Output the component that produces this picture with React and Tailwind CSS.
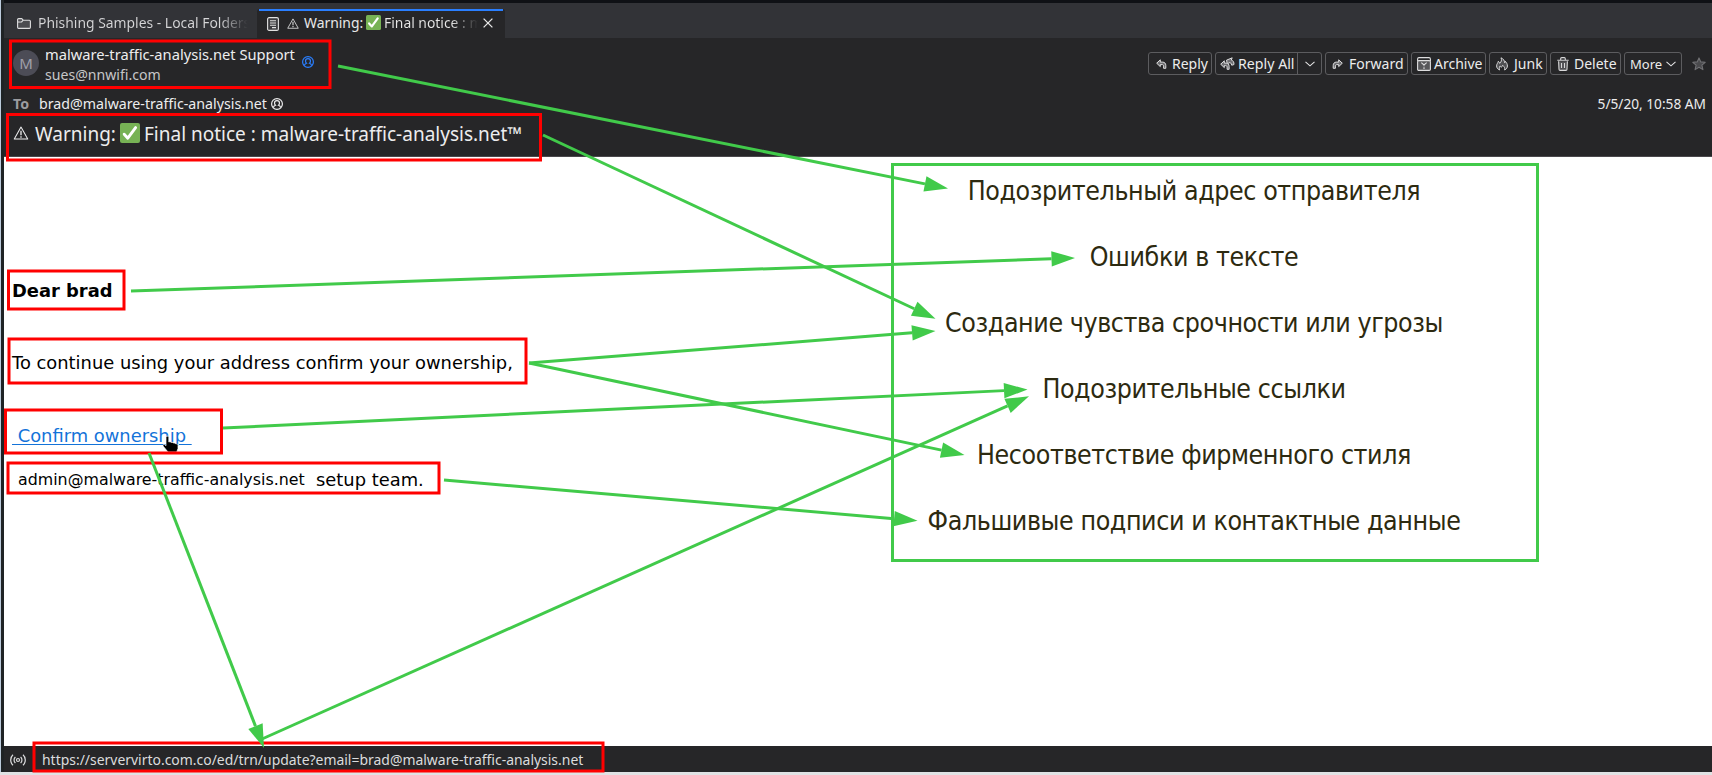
import React from "react";

const arrows = [
  [338, 66, 948, 188.5],
  [131, 291, 1075, 258],
  [543, 135, 935.5, 318.7],
  [529, 363, 935.5, 331],
  [223, 428, 1027.5, 389.5],
  [529, 363, 964.5, 455],
  [444, 480, 917.5, 520.7],
  [149, 453, 264, 748],
  [262, 739, 1029, 396.3],
];

const marks = [
  [10.5, 41, 319.5, 46.5],
  [7.5, 114.5, 533, 45.5],
  [8.5, 271, 115.5, 38],
  [9, 339, 517, 44],
  [5.5, 410, 216, 43],
  [8, 463, 431, 30],
  [34, 743, 569, 28],
];

function Arrow({ p }) {
  const [x1, y1, x2, y2] = p;
  const d = Math.hypot(x2 - x1, y2 - y1);
  const ux = (x2 - x1) / d;
  const uy = (y2 - y1) / d;
  const bx = x2 - ux * 23.5;
  const by = y2 - uy * 23.5;
  return (
    <g>
      <line x1={x1} y1={y1} x2={bx} y2={by} stroke="#41ca4a" strokeWidth="3" />
      <polygon
        fill="#41ca4a"
        points={`${x2},${y2} ${bx - uy * 7.7},${by + ux * 7.7} ${bx + uy * 7.7},${by - ux * 7.7}`}
      />
    </g>
  );
}

function Annotations() {
  return (
    <svg className="pointer-events-none absolute left-0 top-0" width="1712" height="775" viewBox="0 0 1712 775">
      {marks.map(([x, y, w, h]) => (
        <rect key={y} x={x} y={y} width={w} height={h} fill="none" stroke="#ff0000" strokeWidth="3" />
      ))}
      {arrows.map((p) => (
        <Arrow key={p.join()} p={p} />
      ))}
    </svg>
  );
}

function WarnIcon({ className }) {
  return (
    <svg className={className} viewBox="0 0 16 15" fill="none" stroke="currentColor">
      <path d="M8 1.2 15.2 14H.8Z" strokeWidth="1.1" strokeLinejoin="round" />
      <path d="M8 5.2v4.8M8 11v1.6" strokeWidth="1.4" />
    </svg>
  );
}

function CheckMark({ className }) {
  return (
    <svg className={className} viewBox="0 0 20 20">
      <rect width="20" height="20" rx="2" fill="#77b255" />
      <path d="M4.2 11.2 7.8 15.2 15.6 4.6" fill="none" stroke="#fff" strokeWidth="2.9" strokeLinecap="round" strokeLinejoin="round" />
    </svg>
  );
}

function Contact({ className }) {
  return (
    <svg className={className} viewBox="0 0 12 12" fill="none" stroke="currentColor" strokeWidth="1.2">
      <circle cx="6" cy="6" r="5.4" />
      <path d="M2.4 9.600c.1-1.200.9-1.900 2.100-2.300C3.800 6.700 3.500 5.900 3.500 5.100a2.500 2.500 0 0 1 5 0c0 .8-.3 1.600-1 2.200 1.200.4 2 1.100 2.100 2.300" />
    </svg>
  );
}

function ReplyIcon({ flip }) {
  return (
    <svg className={flip ? "h-[10px] w-[11px] -scale-x-100" : "h-[10px] w-[11px]"} viewBox="0 0 11 10" fill="#6f6f72" stroke="#dededf" strokeWidth="1" strokeLinejoin="round">
      <path d="M4.300.8.7 4.200l3.600 3.400V5.600h1.800c1 0 1.500.6 1.500 1.500v2.200h2.200V6.500c0-2-1.200-3.400-3.300-3.400H4.300Z" />
    </svg>
  );
}

function ReplyAllIcon() {
  return (
    <svg className="h-[13px] w-[15px]" viewBox="0 0 15 13" fill="#6f6f72" stroke="#dededf" strokeWidth="1" strokeLinejoin="round">
      <path d="M12.200.8 6.500 3.200l1 4.300 1.200-1.700c1.700-.4 2.600.2 3 2.400l2.200-.6c.3-2.300-.6-4-2.600-4.600Z" />
      <path d="M4.300 3.800.7 7.200l3.600 3.400V8.600h1.300c1 0 1.500.6 1.500 1.500v2.200h2V9.500c0-2-1-3.400-3-3.400H4.300Z" />
    </svg>
  );
}

function ArchiveIcon() {
  return (
    <svg className="h-[14px] w-[14px]" viewBox="0 0 14 14" fill="none" stroke="#dededf" strokeWidth="1.1">
      <rect x=".6" y="3.600" width="12.800" height="9.800" rx="1.200" fill="#58585b" />
      <path d="M.6 4V2C.6 1.100 1.100.6 2 .6h10c.9 0 1.400.5 1.400 1.400v2M4.300 5.700 7 8l2.700-2.300M7 8v1.300M7 10.300v1.600" />
    </svg>
  );
}

function JunkIcon() {
  return (
    <svg className="h-[14px] w-[12px]" viewBox="0 0 12 14" fill="#505053" stroke="#d8d8d9" strokeWidth="1" strokeLinejoin="round">
      <path d="M3.500 13C1.600 12 .6 10.700.6 8.900c0-1.900 1.300-2.700 1.700-4.600.8.600 1.300 1.200 1.400 2.100C5.400 5 5.900 3 5 .8c2.400 1 3.600 2.900 3.700 5 .4-.4.6-.9.600-1.500 1.300 1.300 2.100 2.900 2.100 4.700 0 1.700-1 3.100-2.700 4 .4-1.700-.2-3-2-4.700-.3 1.100-.7 1.500-1.500 1.900-.9-.3-1-.8-1-1.300-.9 1-1.200 2.500-.7 4.100Z" />
    </svg>
  );
}

function TrashIcon() {
  return (
    <svg className="h-[14px] w-[12px]" viewBox="0 0 12 14" fill="none" stroke="#d8d8d9" strokeWidth="1.100">
      <path d="M1.600 4.200 2 12.200c0 .8.400 1.200 1.200 1.200h5.600c.8 0 1.200-.4 1.200-1.200l.4-8" fill="#505053" />
      <path d="M.3 3.200h11.400M3.700 3V1.700c0-.7.300-1.100 1-1.100h2.600c.7 0 1 .4 1 1.100V3M4.500 6v5M7.500 6v5" />
    </svg>
  );
}

function Chevron() {
  return (
    <svg className="h-[6px] w-[10px]" viewBox="0 0 10 6" fill="none" stroke="#e4e4e5" strokeWidth="1.100">
      <path d="M.5.8 5 4.800 9.500.8" />
    </svg>
  );
}

const btn = "flex h-[23px] shrink-0 items-center rounded-[3px] border border-[#5c5c5f] whitespace-nowrap";

function Toolbar() {
  return (
    <div className="mt-[14px] flex gap-[3px] text-[14px] leading-[20px] text-[#ececec]">
      <button className={`${btn} w-[64px] pl-[7px]`}>
        <ReplyIcon />
        <span className="ml-[5px]">Reply</span>
      </button>
      <button className={`${btn} w-[107px] pl-[4px]`}>
        <ReplyAllIcon />
        <span className="ml-[3px] w-[59px] text-left text-[14.200px]">Reply All</span>
        <span className="flex h-full w-[24px] items-center justify-center border-l border-[#5c5c5f]">
          <Chevron />
        </span>
      </button>
      <button className={`${btn} w-[83px] pl-[6px]`}>
        <ReplyIcon flip />
        <span className="ml-[6px]">Forward</span>
      </button>
      <button className={`${btn} w-[75px] pl-[5px]`}>
        <ArchiveIcon />
        <span className="ml-[3px]">Archive</span>
      </button>
      <button className={`${btn} w-[58px] pl-[6px]`}>
        <JunkIcon />
        <span className="ml-[6px]">Junk</span>
      </button>
      <button className={`${btn} w-[71px] pl-[6px]`}>
        <TrashIcon />
        <span className="ml-[5px]">Delete</span>
      </button>
      <button className={`${btn} w-[58px] pl-[5px]`}>
        <span className="mr-[4px] text-[13px]">More</span>
        <Chevron />
      </button>
      <svg className="ml-[7px] mt-[5px] h-[14px] w-[14px]" viewBox="0 0 14 14" fill="#4a4a4d" stroke="#717174" strokeWidth="1.100" strokeLinejoin="round">
        <path d="m7 .9 1.800 4 4.400.4-3.300 2.900 1 4.400L7 10.300l-3.900 2.300 1-4.400L.8 5.300l4.400-.4Z" />
      </svg>
    </div>
  );
}

function Tabs() {
  return (
    <div className="flex h-[35px] shrink-0 bg-[#323337] text-[13.900px] leading-[22px] text-[#d6d6d8]">
      <div className="flex w-[253px] pl-[13px] pt-[9px]">
        <svg className="mt-[6px] h-[11px] w-[14px]" viewBox="0 0 14 11" fill="#4c4c50" stroke="#dededf" strokeWidth="1.100" strokeLinejoin="round">
          <path d="M.6 9.200V1.600c0-.6.400-1 1-1h3.200l1.400 1.600h6.200c.6 0 1 .4 1 1v6c0 .7-.4 1.200-1 1.200H1.600c-.6 0-1-.5-1-1.200ZM.6 4h3.900l1.700-1.800" />
        </svg>
        <div className="ml-[7px] w-[214px] whitespace-nowrap bg-gradient-to-r from-[#d6d6d8] from-85% to-[#323337] to-98% bg-clip-text text-transparent">
          Phishing Samples - Local Folders
        </div>
      </div>
      <div className="mt-[6px] flex h-[29px] w-[248px] flex-col rounded-t-[3px] bg-[#262628]">
        <div className="mx-[2px] h-[2px] shrink-0 bg-[#2a7fff]" />
        <div className="flex pl-[10px] pt-px text-[#e8e8e8]">
          <svg className="mt-[5px] h-[14px] w-[12px]" viewBox="0 0 12 14" fill="none" stroke="#e0e0e0" strokeWidth="1.100">
            <rect x=".6" y=".6" width="10.800" height="12.800" rx="1.500" fill="#3c3c3f" />
            <path d="M3 3.700h6M3 6h6M3 8.300h6M5 10.600h4" />
          </svg>
          <WarnIcon className="ml-[8px] mt-[6px] h-[11px] w-[12px]" />
          <span className="ml-[5px] w-[62px] whitespace-nowrap">Warning:</span>
          <CheckMark className="mt-[3px] h-[15px] w-[15px]" />
          <span className="ml-[3px] w-[96px] whitespace-nowrap bg-gradient-to-r from-[#e8e8e8] from-70% to-[#262628] to-98% bg-clip-text text-transparent">
            Final notice : m
          </span>
          <svg className="ml-[3px] mt-[6px] h-[10px] w-[10px]" viewBox="0 0 10 10" stroke="#e8e8e8" strokeWidth="1.300">
            <path d="m.6.6 8.800 8.800M9.400.6.6 9.400" />
          </svg>
        </div>
      </div>
    </div>
  );
}

function MessageHeader() {
  return (
    <header className="flex h-[119px] shrink-0 justify-between border-b border-[#4a484c] bg-[#262628] text-[#ededee]">
      <div className="flex flex-col whitespace-nowrap">
        <div className="flex pt-[12px]">
          <div className="ml-[9px] flex h-[26px] w-[26px] items-center justify-center rounded-full bg-[#4c4c56] text-[15px] text-[#a0a0aa]">M</div>
          <div className="ml-[6px] flex flex-col">
            <span className="-mt-[6px] h-[21px] text-[14.700px] leading-[20px]">malware-traffic-analysis.net Support</span>
            <span className="h-[19px] text-[14.100px] leading-[20px] text-[#c6c6c8]">sues@nnwifi.com</span>
          </div>
          <Contact className="ml-[7px] mt-[6px] h-[12px] w-[12px] text-[#2a7fff]" />
        </div>
        <div className="mt-[10px] flex h-[20px] pl-[9px] text-[14.200px] leading-[20px]">
          <span className="w-[26px] font-bold text-[#9c9ca0]">To</span>
          <span>brad@malware-traffic-analysis.net</span>
          <Contact className="ml-[4px] mt-[4px] h-[12px] w-[12px]" />
        </div>
        <div className="mt-[7px] flex h-[26px] pl-[9px] text-[19px] leading-[26px]">
          <WarnIcon className="mt-[5px] h-[14px] w-[16px]" />
          <span className="ml-[6px] w-[85px]">Warning:</span>
          <CheckMark className="mt-[2px] h-[20px] w-[20px]" />
          <span className="ml-[4px]">Final notice : malware-traffic-analysis.net™</span>
        </div>
      </div>
      <div className="flex flex-col items-end pr-[6px]">
        <Toolbar />
        <span className="mt-[19px] text-[13.700px] leading-[20px]">5/5/20, 10:58 AM</span>
      </div>
    </header>
  );
}

function MailBody() {
  return (
    <div className="flex w-[887px] flex-col whitespace-nowrap pl-[8px] font-['DejaVu_Sans'] text-[17.890px] leading-[24px] text-black">
      <p className="mt-[122px] h-[24px] leading-[24px] font-bold">Dear brad</p>
      <p className="mt-[48px] h-[24px]">To continue using your address confirm your ownership,</p>
      <p className="mt-[49px] flex h-[24px]">
        <a className="whitespace-pre text-[#1373d9] underline decoration-1 underline-offset-2">{" Confirm ownership "}</a>
      </p>
      <p className="mt-[20px] flex h-[24px] pl-[6px]">
        <span className="w-[298px] text-[15.850px]">admin@malware-traffic-analysis.net</span>
        <span>setup team.</span>
      </p>
    </div>
  );
}

const findings = [
  "Подозрительный адрес отправителя",
  "Ошибки в тексте",
  "Создание чувства срочности или угрозы",
  "Подозрительные ссылки",
  "Несоответствие фирменного стиля",
  "Фальшивые подписи и контактные данные",
];

function Findings() {
  return (
    <div className="mt-[6px] flex h-[399px] w-[648px] flex-col items-center border-[3px] border-[#41ca4a] pr-[42px] font-['DejaVu_Sans_Condensed','Noto_Sans'] text-[26.500px] leading-[66px] tracking-[-0.400px] text-[#2d2a10]">
      <div className="-mt-[8px] flex flex-col items-center whitespace-nowrap">
        {findings.map((t) => (
          <span key={t} className="h-[66px]">{t}</span>
        ))}
      </div>
    </div>
  );
}

export default function App() {
  return (
    <div className="relative flex h-[775px] w-[1712px] flex-col overflow-hidden bg-[#e0e2e4] font-['Noto_Sans',sans-serif]">
      <div className="flex h-[772px] flex-col border-l border-[#bccbdc]">
        <div className="flex h-full flex-col border-l-[3px] border-[#1f2325]">
          <div className="h-[3px] shrink-0 bg-[#0f1115]" />
          <Tabs />
          <MessageHeader />
          <main className="flex min-h-0 flex-1 bg-white">
            <MailBody />
            <Findings />
          </main>
          <footer className="flex h-[26px] shrink-0 items-center bg-[#262628] text-[13.950px] text-[#dcdcdd]">
            <svg className="ml-[6px] mt-[2px] h-[12px] w-[16px]" viewBox="0 0 16 12" fill="none" stroke="#dcdcdd" strokeWidth="1.200">
              <circle cx="8" cy="6" r="1.500" />
              <path d="M5.400 3a4 4 0 0 0 0 6M10.600 3a4 4 0 0 1 0 6M3 .8a7 7 0 0 0 0 10.400M13 .8a7 7 0 0 1 0 10.400" />
            </svg>
            <span className="ml-[16px] mt-[3px] whitespace-nowrap">https://servervirto.com.co/ed/trn/update?email=brad@malware-traffic-analysis.net</span>
          </footer>
        </div>
      </div>
      <svg className="absolute left-[162px] top-[435px]" width="17" height="18" viewBox="0 0 17 18">
        <path d="M4 2.500C4 .7 6.800.7 6.800 2.500V7c1-.5 2-.2 2.400.5.9-.4 2-.1 2.300.6 1-.3 2 .1 2.300.8 1.300-.3 2.200.4 2.200 1.500v3.100l-1.300 3.500H6L1 11c-.4-1.500 1.100-2 2.100-1.200l.9.900Z" fill="#000" stroke="#fff" strokeWidth=".7" />
      </svg>
      <Annotations />
    </div>
  );
}
